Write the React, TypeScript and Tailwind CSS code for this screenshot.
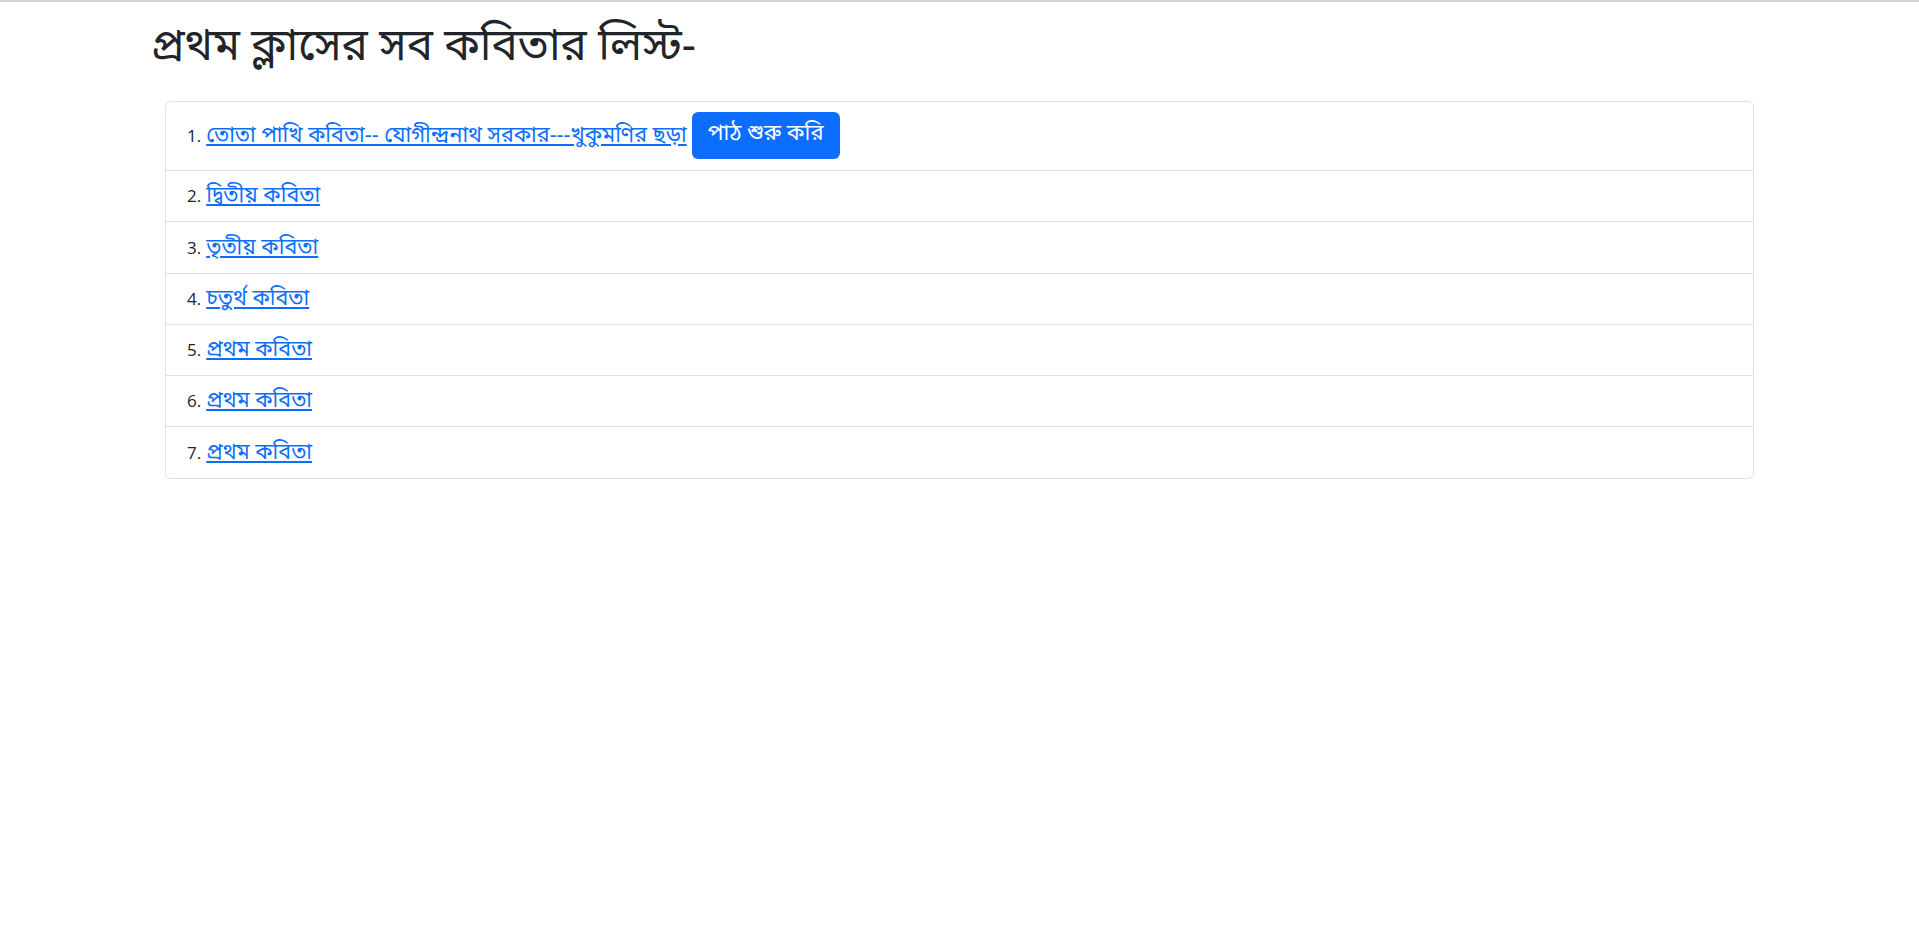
import React from "react";

const rows = [
  { t: "দ্বিতীয় কবিতা", h: "h-[51px] border-b" },
  { t: "তৃতীয় কবিতা", h: "h-[52px] border-b" },
  { t: "চতুর্থ কবিতা", h: "h-[51px] border-b" },
  { t: "প্রথম কবিতা", h: "h-[51px] border-b" },
  { t: "প্রথম কবিতা", h: "h-[51px] border-b" },
  { t: "প্রথম কবিতা", h: "h-[51px]" },
];

export default function App() {
  return (
    <div className="min-h-[932px] w-full bg-white border-t-2 border-[#d4d4d4] font-['Noto_Sans_Bengali','Noto_Sans',sans-serif] text-[#212529]">
      <h1 className="pl-[151px] pt-[15px] h-[99px] text-[44px] leading-[64px] font-normal">প্রথম ক্লাসের সব কবিতার লিস্ট-</h1>
      <div className="mx-[165px] border border-[#dee2e6] rounded-[6px]">
        <div className="h-[69px] border-b border-[#dee2e6] flex items-center pl-[21px] pt-[2px]">
          <div className="leading-[30px]">
            <span className="mr-[5px] font-['Open_Sans','Noto_Sans',sans-serif] text-[17px]">1.</span>
            <a href="#" className="text-[#0d6efd] underline text-[21.5px]">তোতা পাখি কবিতা-- যোগীন্দ্রনাথ সরকার---খুকুমণির ছড়া</a>
          </div>
          <button className="ml-[5px] -mt-[4px] h-[47px] w-[148px] rounded-[6px] bg-[#0d6efd] text-white text-[22px] leading-[30px]">পাঠ শুরু করি</button>
        </div>
        {rows.map((r, i) => (
          <div key={i} className={"flex items-center pl-[21px] pt-[2px] border-[#dee2e6] " + r.h}>
            <div className="leading-[30px]">
              <span className="mr-[5px] font-['Open_Sans','Noto_Sans',sans-serif] text-[17px]">{i + 2}.</span>
              <a href="#" className="text-[#0d6efd] underline text-[21.5px]">{r.t}</a>
            </div>
          </div>
        ))}
      </div>
    </div>
  );
}
